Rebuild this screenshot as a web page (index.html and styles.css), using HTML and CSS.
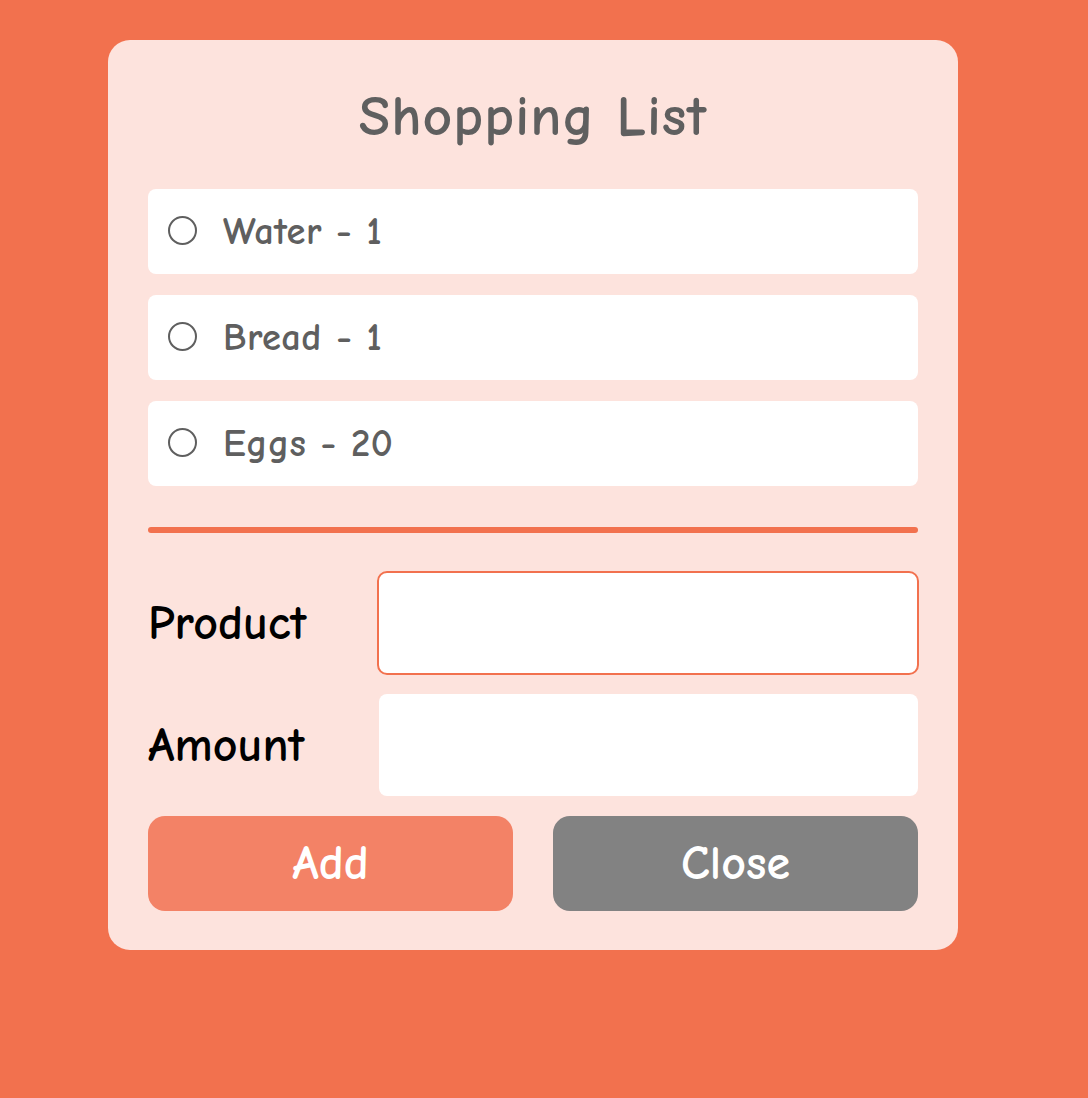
FILE: index.html
```html
<!DOCTYPE html>
<html lang="en">
<head>
<meta charset="utf-8">
<title>Shopping List</title>
<link rel="stylesheet" href="styles.css">
</head>
<body>
  <main class="card">
    <h1 class="title">Shopping List</h1>
    <ul class="list">
      <li class="item"><span class="radio"></span><span class="item-text">Water - 1</span></li>
      <li class="item"><span class="radio"></span><span class="item-text">Bread - 1</span></li>
      <li class="item"><span class="radio"></span><span class="item-text">Eggs - 20</span></li>
    </ul>
    <hr class="divider">
    <form class="form">
      <label class="label" for="product">Product</label>
      <input class="field field-focus" id="product" type="text">
      <label class="label" for="amount">Amount</label>
      <input class="field" id="amount" type="text">
      <div class="buttons">
        <button class="btn btn-add" type="button">Add</button>
        <button class="btn btn-close" type="button">Close</button>
      </div>
    </form>
  </main>
</body>
</html>
```

FILE: styles.css
```css
html, body {
  margin: 0;
  padding: 0;
}
body {
  background: #f2714e;
  min-height: 1098px;
  font-family: "Comic Sans MS", "Comic Neue", "Noto Sans", "DejaVu Sans", sans-serif;
  padding-top: 40px;
  box-sizing: border-box;
}
.card {
  width: 850px;
  margin-left: 108px;
  box-sizing: border-box;
  padding: 40px 40px 39px;
  background: #fde3dd;
  border-radius: 22px;
}
.title {
  margin: 0 0 20px;
  height: 89px;
  line-height: 72px;
  font-size: 57.5px;
  font-weight: bold;
  color: #5f5f5f;
  text-align: center;
  letter-spacing: 1px;
}
.list {
  list-style: none;
  margin: 0;
  padding: 0;
  display: flex;
  flex-direction: column;
  gap: 21px;
}
.item {
  height: 85px;
  background: #fff;
  border-radius: 8px;
  display: flex;
  align-items: center;
  padding-left: 20px;
}
.radio {
  width: 29px;
  height: 29px;
  box-sizing: border-box;
  border: 2px solid #5f5f5f;
  border-radius: 50%;
  margin-right: 26px;
  margin-top: -3px;
}
.item-text {
  font-size: 38.5px;
  font-weight: bold;
  color: #5f5f5f;
  letter-spacing: 0.5px;
}
.divider {
  border: 0;
  height: 6px;
  margin: 41px 0 38px;
  background: #f2714e;
  border-radius: 3px;
}
.form {
  display: grid;
  grid-template-columns: 231px 1fr;
  row-gap: 19px;
  align-items: center;
}
.label {
  font-size: 48px;
  font-weight: bold;
  color: #000;
}
.field {
  height: 102px;
  box-sizing: border-box;
  border: 0;
  border-radius: 8px;
  background: #fff;
  font-size: 30px;
  font-family: inherit;
  padding: 0 16px;
}
.field-focus {
  height: 104px;
  margin: 0 -1px 0 -2px;
  border: 2px solid #f2714e;
  border-radius: 10px;
  outline: none;
}
.buttons {
  grid-column: 1 / -1;
  display: grid;
  grid-template-columns: 1fr 1fr;
  gap: 40px;
  margin-top: 1px;
}
.btn {
  height: 95px;
  border: 0;
  border-radius: 17px;
  color: #fff;
  font-family: inherit;
  font-size: 48px;
  font-weight: bold;
  cursor: pointer;
}
.btn-add {
  background: #f38266;
}
.btn-close {
  background: #828282;
}
```
